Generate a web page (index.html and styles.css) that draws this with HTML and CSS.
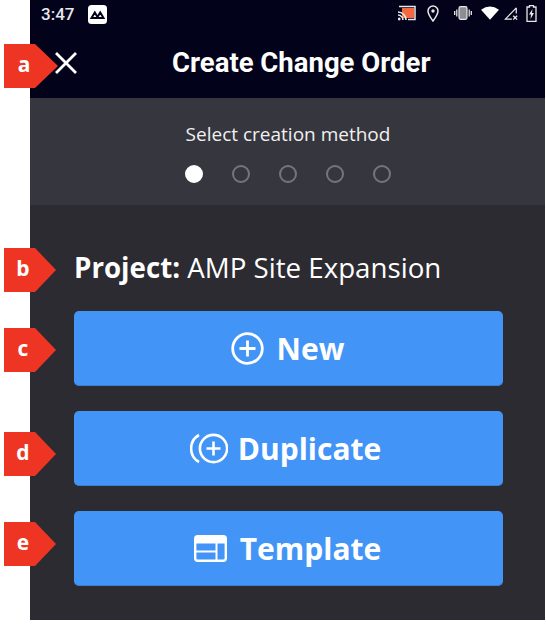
FILE: index.html
```html
<!DOCTYPE html>
<html lang="en">
<head>
    <meta charset="UTF-8">
    <meta name="viewport" content="width=device-width, initial-scale=1.0">
    <title>Create Change Order</title>
    <link rel="stylesheet" href="styles.css">
</head>
<body>
    <div id="screen">
        <header id="app-header">
            <div class="status-bar">
                <span class="status-time">3:47</span>
                <svg class="status-app" width="19" height="19" viewBox="0 0 19 19">
                    <rect width="19" height="19" rx="3.5" fill="#fff"/>
                    <path d="M3.5 13 L6.8 7.5 L9.5 12 L12.2 7.5 L15.5 13 Z" fill="none" stroke="#02021a" stroke-width="2"/>
                </svg>
                <div class="status-icons">
                    <svg width="18" height="16" viewBox="0 0 18 16">
                        <path d="M1 1.5 H17 V14.5 H10" fill="none" stroke="#e8e8e8" stroke-width="1.5"/>
                        <rect x="4" y="3" width="12" height="10" fill="#f4673f"/>
                        <path d="M0 7 A8 8 0 0 1 8 15 M0 10 A5 5 0 0 1 5 15" fill="none" stroke="#e8e8e8" stroke-width="1.6"/>
                        <circle cx="1.2" cy="14" r="1.4" fill="#e8e8e8"/>
                    </svg>
                    <svg class="icon-pin" width="12" height="17" viewBox="0 0 12 17">
                        <path d="M6 16 C3 12 1 9 1 6 A5 5 0 0 1 11 6 C11 9 9 12 6 16 Z" fill="none" stroke="#e8e8e8" stroke-width="1.5"/>
                        <circle cx="6" cy="6" r="1.7" fill="#e8e8e8"/>
                    </svg>
                    <svg class="icon-vibrate" width="18" height="14" viewBox="0 0 18 14">
                        <rect x="5" y="0.7" width="8" height="12.6" rx="1.5" fill="#8d8d95" stroke="#e8e8e8" stroke-width="1.2"/>
                        <path d="M2.8 3.5 V10.5 M0.7 5 V9 M15.2 3.5 V10.5 M17.3 5 V9" stroke="#e8e8e8" stroke-width="1.3"/>
                    </svg>
                    <svg class="icon-wifi" width="18" height="14" viewBox="0 0 20 15">
                        <path d="M0 4 Q10 -3.5 20 4 L10 15 Z" fill="#fff"/>
                    </svg>
                    <svg class="icon-signal" width="14" height="15" viewBox="0 0 16 16">
                        <path d="M14 1.5 V8 M14 1.5 L1.5 14.5 H9" fill="none" stroke="#e8e8e8" stroke-width="1.4"/>
                        <path d="M10.5 10.5 L15 15 M15 10.5 L10.5 15" stroke="#e8e8e8" stroke-width="1.5"/>
                    </svg>
                    <svg class="icon-battery" width="11" height="17" viewBox="0 0 11 17">
                        <path d="M3.5 0.5 H7.5 V2 H10 V16.5 H1 V2 H3.5 Z" fill="none" stroke="#e8e8e8" stroke-width="1.3"/>
                        <path d="M6.5 4 L3 9.5 H5 L4.5 14 L8 8 H6 Z" fill="#e8e8e8"/>
                    </svg>
                </div>
            </div>
            <div class="title-bar">
                <svg class="close-icon" width="22" height="22" viewBox="0 0 22 22">
                    <path d="M1 1 L21 21 M21 1 L1 21" stroke="#fff" stroke-width="2.8"/>
                </svg>
                <h1>Create Change Order</h1>
            </div>
        </header>

        <section id="stepper">
            <p>Select creation method</p>
            <div class="dots">
                <span class="dot active"></span>
                <span class="dot"></span>
                <span class="dot"></span>
                <span class="dot"></span>
                <span class="dot"></span>
            </div>
        </section>

        <main id="method-list">
            <h2><strong>Project:</strong> AMP Site Expansion</h2>
            <button type="button" class="method-btn">
                <svg width="33" height="33" viewBox="0 0 33 33">
                    <circle cx="16.5" cy="16.5" r="14.8" fill="none" stroke="#fff" stroke-width="2.8"/>
                    <path d="M16.5 8.5 V24.5 M8.5 16.5 H24.5" stroke="#fff" stroke-width="2.8"/>
                </svg>
                New
            </button>
            <button type="button" class="method-btn method-btn-duplicate">
                <svg width="38" height="31" viewBox="0 0 38 31">
                    <circle cx="23.5" cy="15.5" r="13.6" fill="none" stroke="#fff" stroke-width="2.6"/>
                    <path d="M23.5 8.5 V22.5 M16.5 15.5 H30.5" stroke="#fff" stroke-width="2.6"/>
                    <path d="M9 2 A15.5 15.5 0 0 0 9 29" fill="none" stroke="#fff" stroke-width="2.6"/>
                </svg>
                Duplicate
            </button>
            <button type="button" class="method-btn">
                <svg width="33" height="27" viewBox="0 0 33 27">
                    <rect x="1.2" y="1.2" width="30.6" height="24.6" rx="2.5" fill="none" stroke="#fff" stroke-width="2.4"/>
                    <rect x="1.2" y="1.2" width="30.6" height="7.3" fill="#fff"/>
                    <path d="M2 16.5 H22.5 M22.5 8 V25" stroke="#fff" stroke-width="2"/>
                </svg>
                Template
            </button>
        </main>
    </div>

    <div class="marker marker-a">a</div>
    <div class="marker marker-b">b</div>
    <div class="marker marker-c">c</div>
    <div class="marker marker-d">d</div>
    <div class="marker marker-e">e</div>
</body>
</html>
```

FILE: styles.css
```css
html, body {
    margin: 0;
    padding: 0;
    height: 100%;
    overflow: hidden;
    background-color: #fff;
}

body {
    position: relative;
    font-family: "Open Sans", sans-serif;
    color: #fff;
}

#screen {
    display: flex;
    flex-direction: column;
    width: 515px;
    height: 620px;
    margin-left: 30px;
    background-color: #2c2b31;
}

#app-header {
    height: 98px;
    background-color: #02021a;
}

.status-bar {
    display: flex;
    align-items: center;
    height: 28px;
    padding: 0 8px 0 11px;
    font-family: Roboto, sans-serif;
}

.status-time {
    font-size: 17px;
    font-weight: 500;
    color: #e8e8e8;
}

.status-app {
    margin-left: 14px;
}

.status-icons {
    display: flex;
    align-items: center;
    margin-left: auto;
    margin-bottom: 2px;
}

.icon-pin {
    margin-left: 11px;
}

.icon-vibrate {
    margin-left: 15px;
}

.icon-wifi {
    margin-left: 9px;
}

.icon-signal {
    margin-left: 5px;
}

.icon-battery {
    margin-left: 8px;
}

.title-bar {
    display: flex;
    align-items: center;
    height: 70px;
    padding-left: 25px;
}

.close-icon {
    flex-shrink: 0;
}

h1 {
    margin: 0 0 2px 95px;
    font-family: Roboto, sans-serif;
    font-size: 27.5px;
    font-weight: 700;
    white-space: nowrap;
}

#stepper {
    display: flex;
    flex-direction: column;
    align-items: center;
    height: 107px;
    padding-left: 1px;
    background-color: #36363e;
}

#stepper p {
    margin: 23px 0 0;
    font-size: 19px;
    line-height: 26px;
    color: #f0f0f0;
}

.dots {
    display: flex;
    gap: 29px;
    margin-top: 18px;
}

.dot {
    box-sizing: border-box;
    width: 18px;
    height: 18px;
    border: 2px solid #75757c;
    border-radius: 50%;
}

.dot.active {
    background-color: #fff;
    border-color: #fff;
}

#method-list {
    display: flex;
    flex-direction: column;
    gap: 25px;
    padding: 44px 42px 0 44px;
}

h2 {
    margin: 0;
    font-size: 27.7px;
    font-weight: 400;
    line-height: 37px;
    white-space: nowrap;
}

h2 strong {
    font-weight: 700;
}

.method-btn {
    display: flex;
    align-items: center;
    justify-content: center;
    gap: 13px;
    height: 75px;
    padding: 0 2px 0 0;
    background-color: #4294f7;
    color: #fff;
    border: none;
    border-bottom: 1px solid #3a7fd3;
    border-radius: 5px;
    font-family: "Open Sans", sans-serif;
    font-size: 30px;
    font-weight: 700;
    cursor: pointer;
}

.method-btn-duplicate {
    gap: 10px;
    padding-right: 6px;
}

.marker {
    position: absolute;
    left: 4px;
    display: flex;
    align-items: center;
    justify-content: center;
    box-sizing: border-box;
    width: 52px;
    height: 44px;
    padding: 0 14px 4px 0;
    background-color: #ee3524;
    clip-path: polygon(0 0, 31px 0, 100% 50%, 31px 100%, 0 100%);
    font-size: 21px;
    font-weight: 700;
}

.marker-a { top: 44px; width: 54px; }
.marker-b { top: 248px; }
.marker-c { top: 328px; }
.marker-d { top: 432px; }
.marker-e { top: 522px; }
```
